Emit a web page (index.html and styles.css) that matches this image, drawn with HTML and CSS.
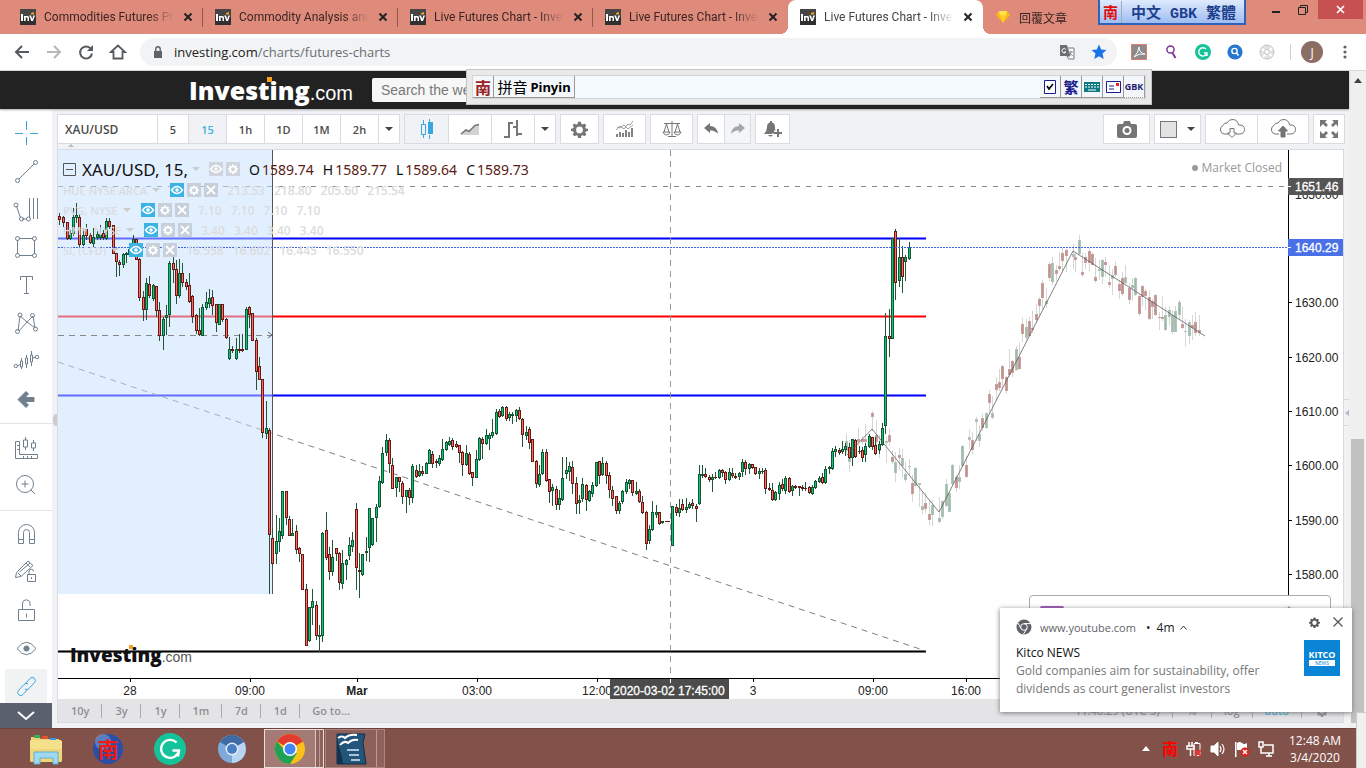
FILE: index.html
```html
<!DOCTYPE html>
<html lang="en">
<head>
<meta charset="utf-8">
<title>Live Futures Chart - Investing.com</title>
<link rel="stylesheet" href="styles.css">
</head>
<body>
<svg class="defs" aria-hidden="true">
  <symbol id="fav" viewBox="0 0 16 16"><rect width="16" height="16" fill="#303030"/><rect width="16" height="8" fill="#454545"/><path d="M1 5h2v7H1zM4 7h3.5q1.500 0 1.500 1.500V12H7.500V9Q7.500 8.500 6.500 8.500H5.700V12H4zM9.200 6.500H11L12.200 10 13.400 6.500H15L13 12H11.300z" fill="#fff"/><path d="M11 4l3-1v2.500h-3z" fill="#f7a21b"/></symbol>
  <symbol id="gear" viewBox="0 0 20 20"><path fill="currentColor" fill-rule="evenodd" d="M8.300 1h3.400l.5 2.500 1.500.7L15.900 3 18 5.200l-1.300 2.100.6 1.400L20 9.200v2.600l-2.600.5-.6 1.500L18 16l-2 2-2.200-1.300-1.500.6L11.700 20H8.300l-.5-2.600-1.500-.7L4 18l-2-2 1.300-2.200-.6-1.500L0 11.800V9.200l2.600-.6.7-1.400L2 5l2-2 2.200 1.300 1.500-.7zM10 6.500a4 4 0 1 0 0 8 4 4 0 0 0 0-8z"/></symbol>
  <symbol id="eye" viewBox="0 0 14 14"><path d="M1.500 7Q7 0 12.500 7 7 14 1.500 7z" fill="none" stroke="#fff" stroke-width="1.500"/><circle cx="7" cy="7" r="1.800" fill="#fff"/></symbol>
  <symbol id="x" viewBox="0 0 14 14"><path d="M3 3l8 8M11 3l-8 8" stroke="#fff" stroke-width="1.800"/></symbol>
</svg>

<div class="tabs">
  <div class="tab"><svg class="fav"><use href="#fav"/></svg><span class="tab-t">Commodities Futures Prices</span><button class="tab-x" aria-label="Close tab"><svg viewBox="0 0 8 8"><path d="M.5.5l7 7M7.500.5l-7 7"/></svg></button></div>
  <div class="tab"><svg class="fav"><use href="#fav"/></svg><span class="tab-t">Commodity Analysis and Opinion</span><button class="tab-x" aria-label="Close tab"><svg viewBox="0 0 8 8"><path d="M.5.5l7 7M7.500.5l-7 7"/></svg></button></div>
  <div class="tab"><svg class="fav"><use href="#fav"/></svg><span class="tab-t">Live Futures Chart - Investing</span><button class="tab-x" aria-label="Close tab"><svg viewBox="0 0 8 8"><path d="M.5.5l7 7M7.500.5l-7 7"/></svg></button></div>
  <div class="tab last"><svg class="fav"><use href="#fav"/></svg><span class="tab-t">Live Futures Chart - Investing</span><button class="tab-x" aria-label="Close tab"><svg viewBox="0 0 8 8"><path d="M.5.5l7 7M7.500.5l-7 7"/></svg></button></div>
  <div class="tab active"><svg class="fav"><use href="#fav"/></svg><span class="tab-t">Live Futures Chart - Investing</span><button class="tab-x" aria-label="Close tab"><svg viewBox="0 0 8 8"><path d="M.5.5l7 7M7.500.5l-7 7"/></svg></button></div>
  <div class="tab last"><svg class="fav" viewBox="0 0 16 16"><path d="M4 2h8l3 4-7 8-7-8z" fill="#fcb813"/><path d="M4 2h8l-1 4H5z" fill="#ffe14d"/><path d="M5 6h6l-3 8z" fill="#ffd02b"/></svg><span class="tab-t">回覆文章</span></div>
  <div class="win">
    <button aria-label="Minimize"><svg width="8" height="10"><path d="M0 6h8v2H0z" fill="#222"/></svg></button>
    <button aria-label="Restore"><svg width="10" height="10" fill="none" stroke="#222"><path d="M.5 2.500h7v7h-7zM2.500 2V.5h7v7H8"/></svg></button>
    <button class="win-x" aria-label="Close"><svg width="9" height="9"><path d="M1 1l7 7M8 1L1 8" stroke="#fff" stroke-width="1.700"/></svg></button>
  </div>
</div>

<div class="nav">
  <button aria-label="Back"><svg viewBox="0 0 16 16"><path d="M15 8H2M8 2L2 8l6 6" stroke="#555a5f" stroke-width="2" fill="none"/></svg></button>
  <button aria-label="Forward"><svg viewBox="0 0 16 16"><path d="M1 8h13M8 2l6 6-6 6" stroke="#b5b8bb" stroke-width="2" fill="none"/></svg></button>
  <button aria-label="Reload"><svg viewBox="0 0 16 16"><path d="M13 5A6 6 0 1 0 14 9.500" stroke="#555a5f" stroke-width="2" fill="none"/><path d="M15 1v6H9z" fill="#555a5f"/></svg></button>
  <button aria-label="Home"><svg viewBox="0 0 16 16"><path d="M1 8l7-6.500L15 8h-2.500v6.500h-9V8z" stroke="#555a5f" stroke-width="1.800" fill="none"/></svg></button>
  <div class="omni">
    <svg class="lock" viewBox="0 0 10 13"><path d="M1 5h8v7H1z" fill="#5f6368"/><path d="M2.800 5V3a2.200 2.200 0 0 1 4.400 0v2" stroke="#5f6368" stroke-width="1.400" fill="none"/></svg>
    <span class="url"><b>investing.com</b>/charts/futures-charts</span>
    <svg class="ic16" viewBox="0 0 16 16"><path d="M1 1h7l3 11H1z" fill="#6b6f73"/><path d="M8.500 4H15v11H9.500L8 12h3z" fill="#fff" stroke="#777"/><path d="M7 5.500A2.200 2.200 0 1 0 7 8H5" stroke="#fff" fill="none"/><path d="M10 8h4M12 7v1q0 3-2 4M11 9q1 2 3 3" stroke="#777" fill="none" stroke-width=".8"/></svg>
    <svg class="ic16" viewBox="0 0 16 16"><path d="M8 .5l2.200 5 5.300.5-4 3.600 1.200 5.400L8 12.200 3.300 15l1.200-5.400-4-3.600 5.300-.5z" fill="#1a73e8"/></svg>
  </div>
  <div class="ext">
    <svg class="ic16" viewBox="0 0 16 16"><path d="M.5.5h15v15H.5z" fill="#8b8b8b" stroke="#de7d6d"/><path d="M3 13q5-5 5-10 0 6 6 7Q8 9 3 13z" fill="none" stroke="#fff"/></svg>
    <svg class="ic16" viewBox="0 0 16 16"><circle cx="7.500" cy="5.500" r="3.600" fill="none" stroke="#7d2c9c" stroke-width="1.500"/><path d="M9.500 9l3 5" stroke="#7d2c9c" stroke-width="1.800"/></svg>
    <svg class="ic16" viewBox="0 0 16 16"><circle cx="8" cy="8" r="8" fill="#15c39a"/><path d="M11 5a4.200 4.200 0 1 0 1 4H9m3 0v3" stroke="#fff" stroke-width="1.400" fill="none"/></svg>
    <svg class="ic16" viewBox="0 0 16 16"><circle cx="8" cy="8" r="7.600" fill="#2478cf"/><circle cx="7.500" cy="7" r="2.600" fill="none" stroke="#fff" stroke-width="1.400"/><path d="M9.500 9l2 2.500" stroke="#fff" stroke-width="1.600"/></svg>
    <svg class="ic16" viewBox="0 0 16 16"><circle cx="8" cy="8" r="7" fill="#e2e2e0" stroke="#c3c3c0"/><path d="M3 5l10 7M13 4L4 13" stroke="#fff" stroke-width="2"/><circle cx="8" cy="8" r="2.500" fill="#fff" stroke="#c3c3c0"/></svg>
    <i class="vr"></i><span class="avatar">J</span>
    <svg class="dots" viewBox="0 0 4 14" fill="#5f6368"><circle cx="2" cy="2" r="1.600"/><circle cx="2" cy="7" r="1.600"/><circle cx="2" cy="12" r="1.600"/></svg>
  </div>
</div>

<div class="view">
<div class="page">
  <header class="site">
    <a class="logo" href="#">Investing<span>.com</span><i></i></a>
    <input class="search" type="text" aria-label="Search" placeholder="Search the website...">
  </header>
  <div class="app">
    <aside class="tools">
      <div class="tg">
        <button class="tool on" aria-label="Cross"><svg><path d="M12.500 0v9M12.500 16v8M1 12.500h8M16 12.500h8"/></svg></button>
        <button class="tool" aria-label="Trend line"><svg><path d="M5 20L20 5"/><circle cx="3.500" cy="21.500" r="2"/><circle cx="21.500" cy="3.500" r="2"/></svg></button>
        <button class="tool" aria-label="Pitchfork"><svg><path d="M2.500 9l4 12M8 22h5M15.500 21V1M19.500 22V1M23.500 22V1"/><circle cx="2" cy="8" r="2"/><circle cx="7.500" cy="22" r="2"/><circle cx="14.500" cy="22" r="2"/></svg></button>
        <button class="tool" aria-label="Rectangle"><svg><path d="M5 3.500h14M5 20.500h14M3.500 5v14M20.500 5v14"/><circle cx="3.500" cy="3.500" r="2"/><circle cx="20.500" cy="3.500" r="2"/><circle cx="3.500" cy="20.500" r="2"/><circle cx="20.500" cy="20.500" r="2"/></svg></button>
        <button class="tool" aria-label="Text"><svg><path d="M6.500 7V3.500h12V7M12.500 4v16.500M10 20.500h5"/></svg></button>
        <button class="tool" aria-label="Pattern"><svg><path d="M4 20L6 5l7 6 6-6 2 12-8-6-8 9"/><circle cx="6" cy="4" r="2"/><circle cx="18.500" cy="4.500" r="2"/><circle cx="3.500" cy="20.500" r="2"/><circle cx="21.500" cy="18" r="2"/></svg></button>
        <button class="tool" aria-label="Forecast"><svg><path d="M3 17l4-2M19 9l3-1M7.500 9v3M7.500 18v2M12.500 6v3M12.500 15v4M17.500 2v4M17.500 13v4"/><path d="M6.500 12h2v6h-2zM11.500 9h2v6h-2zM16.500 6h2v7h-2z"/><circle cx="1.800" cy="17" r="1.700"/><circle cx="23" cy="8" r="1.700"/></svg></button>
        <button class="tool" aria-label="Back"><svg><path d="M4 12.500l8-8 2.500 2.500-3.500 3.500H20v4h-9l3.500 3.500L12 20.500z" fill="#70808f"/></svg></button>
      </div>
      <div class="tg tg2">
        <button class="tool" aria-label="Measure"><svg><path d="M1.500 5.500h4v13h18v4h-22zM3 9.500h2M3 13.500h2M9.500 20v2M13.500 20v2M17.500 20v2M11.500 1v3M11.500 11v3M19.500 4v3M19.500 12v3"/><path d="M9.500 4h4v7h-4zM17.500 7h4v5h-4z"/></svg></button>
        <button class="tool" aria-label="Zoom in"><svg><circle cx="11" cy="11" r="8.500"/><path d="M17 17l4 4M11 7.500v7M7.500 11h7"/></svg></button>
      </div>
      <div class="tg tg3">
        <button class="tool" aria-label="Magnet"><svg><path d="M4.500 21.500v-11a8 8 0 0 1 16 0v11h-5v-11a3 3 0 0 0-6 0v11zM4.500 17.500h5M15.500 17.500h5"/></svg></button>
        <button class="tool" aria-label="Stay in drawing mode"><svg><path d="M1.500 17.500l1-5L14 1l5 4.500L7 16.500zM4 13l3 3M5.500 12L16 3M12 3l4 4M13.500 14.500h8v7h-8zM15 14v-2.500a2 2 0 0 1 4.500 0M17.500 17v2"/></svg></button>
        <button class="tool" aria-label="Lock"><svg><path d="M4.500 11.500h16v11h-16zM8.500 11V5a3.800 3.800 0 0 1 7.500 0v3M12.500 15.500v4"/></svg></button>
        <button class="tool" aria-label="Hide"><svg><path d="M3 12.500Q12.500 0 22 12.500 12.500 25 3 12.500z"/><circle cx="12.500" cy="12.500" r="2.600" fill="#70808f"/></svg></button>
        <button class="tool on sel" aria-label="Link"><svg><path d="M11 10l5-5.500a3 3 0 0 1 4.500 4L15 14.500a3 3 0 0 1-4 .5M14 15l-5 5.500a3 3 0 0 1-4.500-4L10 10.500a3 3 0 0 1 4-.5"/></svg></button>
      </div>
      <button class="more" aria-label="More"><svg width="18" height="10"><path d="M1 1l8 7 8-7" fill="none" stroke="#fff" stroke-width="2"/></svg></button>
    </aside>

    <main class="main">
      <div class="bar">
        <div class="bg"><button class="sym">XAU/USD</button><button class="w31">5</button><button class="on w38">15</button><button class="w38">1h</button><button class="w38">1D</button><button class="w38">1M</button><button class="w38">2h</button><button class="dd" aria-label="More intervals"><i></i></button></div>
        <div class="bg"><button class="on w43" aria-label="Candles"><svg width="14" height="20" stroke="#37a6dc" fill="none"><path d="M3.500 1v4M3.500 15v4M9.500 0v3M9.500 16v4"/><path d="M1.500 5.500h4v10h-4z"/><path d="M8 3h5v12H8z" fill="#37a6dc" stroke="none"/></svg></button><button class="w43" aria-label="Area"><svg width="18" height="12"><path d="M0 10l5-4 4 2 5-5 4-2v11H0z" fill="#d2d2d2"/><path d="M0 11l5-4 3 1.500 6-6 4-1" fill="none" stroke="#757575" stroke-width="1.500"/></svg></button><button class="w43" aria-label="Bars"><svg width="18" height="19" stroke="#757575" stroke-width="2" fill="none"><path d="M5 2v16M0 17h5M5 3h4M13 0v16M9 7h4M13 14h5"/></svg></button><button class="dd" aria-label="More styles"><i></i></button></div>
        <div class="bg"><button class="w37 gr" aria-label="Settings"><svg width="17" height="17"><use href="#gear"/></svg></button></div>
        <div class="bg"><button class="w41" aria-label="Indicators"><svg width="18" height="16" fill="none" stroke="#757575"><path d="M1 16v-3M4 16v-5M7 16v-4M10 16V9M13 16v-5M16 16V7" stroke-width="1.800"/><path d="M0 9l4-4 4 3 4-5 2 1 3-4M1 6l3 1 4-3 4 4 5-4" stroke-width=".7"/></svg></button></div>
        <div class="bg"><button class="w41" aria-label="Compare"><svg width="18" height="16" fill="none" stroke="#757575"><path d="M1 2.500h16M9 0v15M5 15.500h8M3.500 3L1 11M3.500 3L6 11M14.500 3L12 11M14.500 3L17 11"/><path d="M0 11h7q-1 3-3.500 3T0 11zM11 11h7q-1 3-3.500 3T11 11z"/></svg></button></div>
        <div class="bg"><button class="w26" aria-label="Undo"><svg width="14" height="12"><path d="M0 5l6-5v3q7 0 8 8-3-4-8-3.500V10z" fill="#757575"/></svg></button><button class="w26 dis" aria-label="Redo"><svg width="14" height="12"><path d="M14 5L8 0v3Q1 3 0 11q3-4 8-3.500V10z" fill="#a5a7aa"/></svg></button></div>
        <div class="bg"><button class="w33" aria-label="Alert"><svg width="18" height="17" fill="#757575"><path d="M0 13q3-3 3-7 0-4 3-4.500V0h2v1.500Q11 2 11 6q0 2 .5 3.500H10v3H8V13z"/><path d="M4 14h5q-2.500 3-5 0z"/><path d="M13 8h2v3h3v2h-3v3h-2v-3h-3v-2h3z"/></svg></button></div>
        <span class="grow"></span>
        <div class="bg"><button class="w45" aria-label="Snapshot"><svg width="20" height="17" fill="#757575"><path d="M2 3h4l1-3h6l1 3h4q2 0 2 2v10q0 2-2 2H2q-2 0-2-2V5q0-2 2-2z"/><circle cx="10" cy="9.500" r="4.500" fill="#fff"/><circle cx="10" cy="9.500" r="2.500"/></svg></button></div>
        <div class="bg"><button class="w45 color" aria-label="Background colour"><b></b><i></i></button></div>
        <div class="bg"><button class="w51" aria-label="Load"><svg width="26" height="20" fill="none" stroke="#757575"><path d="M10 15H5a4.500 4.500 0 0 1-1-8.500q1-3 4-2.500 2-4 6-3.500 5 .5 5.500 5.500 6-.5 6 4.500 0 4-4.500 4.500H17"/><path d="M11 9.500h4V14h2.500L13 18.500 8.500 14H11z"/></svg></button><button class="w51" aria-label="Save"><svg width="26" height="20" fill="none" stroke="#757575"><path d="M9 15H5a4.500 4.500 0 0 1-1-8.500q1-3 4-2.500 2-4 6-3.500 5 .5 5.500 5.500 6-.5 6 4.500 0 4-4.500 4.500H17"/><path d="M11 18v-6H8.500L13 7l4.500 5H15v6z" fill="#757575"/></svg></button></div>
        <div class="bg"><button class="w30" aria-label="Full screen"><svg width="18" height="18"><path d="M0 0h7L5 2l3 3-2 2-3-3-3 3zM18 0h-6l2 2-3 3 2 2 3-3 2 3zM0 18h7l-2-2 3-3-2-2-3 3-3-3zM18 18h-6l2-2-3-3 2-2 3 3 2-3z" fill="#757575"/></svg></button></div>
      </div>
      <div class="strip"><span></span></div>
      <div class="chart">
        <div class="plotrow">
          <div class="plot">
            <svg class="canvas" role="img" aria-label="XAU/USD 15 minute candles">
              <g transform="translate(-58 -150)">
                <path d="M58 186.500H4000" stroke="#8a8a8a" stroke-dasharray="5 6"/>
                <g fill="none"><path d="M58 238.500H926M58 395.500H926" stroke="#7c7cff" stroke-width="3"/><path d="M58 316.500H926" stroke="#ff7c7c" stroke-width="3"/><path d="M58 238.500H926M58 395.500H926" stroke="#0000ff"/><path d="M58 316.500H926" stroke="#ff0000"/></g>
                <path d="M58 651.500H926" stroke="#777" stroke-width="3"/><path d="M58 651.500H926" stroke="#000"/>
                <path d="M58 362L926 651" stroke="#808080" stroke-dasharray="6 5"/>
                <rect x="58" y="150" width="215" height="444" fill="#c5dfff" fill-opacity=".5"/>
                <path d="M58 335.500H272" stroke="#888" stroke-dasharray="6 5"/><path d="M268 332l4 3-4 3" fill="none" stroke="#666"/>
                <path d="M272.500 150V594" stroke="#555"/>
                <g id="ghost" shape-rendering="crispEdges"></g>
                <g id="candles" shape-rendering="crispEdges"></g>
                <path d="M847 455L872 429 939 512 1073 251 1205 336" fill="none" stroke="#555" stroke-opacity=".75"/>
                <path d="M58 247.500H4000" stroke="#3d65e0" stroke-dasharray="2 1"/>
                <path d="M670.500 150V680" stroke="#999" stroke-dasharray="6 5"/>
              </g>
            </svg>
            <div class="legend">
              <div class="lr head"><svg width="13" height="13" fill="none" stroke="#555"><path d="M.5.5h12v12H.5zM3 6.500h7"/></svg><span class="ttl">XAU/USD, 15,</span><i class="car"></i><span class="sq off"><svg><use href="#eye"/></svg></span><span class="sq off"><svg viewBox="-4 -4 28 28"><use href="#gear" width="20" height="20"/></svg></span>
                <span class="ohlc"><b>O</b>1589.74</span><span class="ohlc"><b>H</b>1589.77</span><span class="ohlc"><b>L</b>1589.64</span><span class="ohlc"><b>C</b>1589.73</span></div>
              <div class="lr"><span class="nm">HUI, NYSE ARCA</span><i class="car"></i><span class="sq"><svg><use href="#eye"/></svg></span><span class="sq off"><svg viewBox="-4 -4 28 28"><use href="#gear" width="20" height="20"/></svg></span><span class="sq off"><svg><use href="#x"/></svg></span><span class="vals"><span>213.53</span><span>218.80</span><span>205.60</span><span>215.54</span></span></div>
              <div class="lr"><span class="nm">PVG, NYSE</span><i class="car"></i><span class="sq"><svg><use href="#eye"/></svg></span><span class="sq off"><svg viewBox="-4 -4 28 28"><use href="#gear" width="20" height="20"/></svg></span><span class="sq off"><svg><use href="#x"/></svg></span><span class="vals"><span>7.10</span><span>7.10</span><span>7.10</span><span>7.10</span></span></div>
              <div class="lr"><span class="nm">HMY, NYSE</span><i class="car"></i><span class="sq"><svg><use href="#eye"/></svg></span><span class="sq off"><svg viewBox="-4 -4 28 28"><use href="#gear" width="20" height="20"/></svg></span><span class="sq off"><svg><use href="#x"/></svg></span><span class="vals"><span>3.40</span><span>3.40</span><span>3.40</span><span>3.40</span></span></div>
              <div class="lr"><span class="nm">SI, (CFD)</span><i class="car"></i><span class="sq"><svg><use href="#eye"/></svg></span><span class="sq off"><svg viewBox="-4 -4 28 28"><use href="#gear" width="20" height="20"/></svg></span><span class="sq off"><svg><use href="#x"/></svg></span><span class="vals"><span>16.558</span><span>16.602</span><span>16.445</span><span>16.550</span></span></div>
            </div>
            <div class="status"><i></i>Market Closed</div>
            <div class="wm">Investing<span>.com</span><i></i></div>
          </div>
          <svg class="paxis"><g transform="translate(0 -150)" id="prices"></g></svg>
        </div>
        <svg class="taxis"><g transform="translate(-58 -679)" id="times"></g></svg>
        <div class="ranges"><button>10y</button><button>3y</button><button>1y</button><button>1m</button><button>7d</button><button>1d</button><button class="nb">Go to...</button><span class="grow"></span><button>11:48:29 (UTC-5)</button><button>%</button><button>log</button><button class="auto">auto</button><button class="nb" aria-label="Settings"><svg width="12" height="12"><use href="#gear"/></svg></button></div>
      </div>
      <button class="lefth" aria-label="Collapse tools"></button>
      <button class="righth" aria-label="Open panel"><svg width="4" height="6"><path d="M4 0v6L0 3z" fill="#b5b8be"/></svg></button>
    </main>
  </div>
</div>
<div class="scroll"><i></i><div class="track"><b></b></div></div>
</div>

<footer class="task">
  <a class="app-i" href="#" aria-label="File Explorer"><svg viewBox="0 0 32 32"><path d="M1 4h8l2 2h18v4H1z" fill="#e8d27a"/><path d="M4 2h6v3H4z" fill="#37b24a"/><path d="M12 3h6v3h-6z" fill="#e0532f"/><path d="M20 5h6v3h-6z" fill="#3a97e8"/><path d="M0 8q0-1 1-1h29q2 0 2 2v18q0 2-2 2H2q-2 0-2-2z" fill="#f5e18b"/><path d="M0 16h32v11q0 2-2 2H2q-2 0-2-2z" fill="#efd678"/><path d="M4 19h24v12h-5v-6H10v6H4z" fill="#9fd8ef" stroke="#5fb0d4"/></svg></a>
  <a class="app-i" href="#" aria-label="NJStar"><svg viewBox="0 0 32 32"><circle cx="16" cy="16" r="15" fill="#2a4fa6"/><circle cx="11" cy="9" r="8" fill="#7c9bd4" opacity=".6"/></svg><b>南</b></a>
  <a class="app-i" href="#" aria-label="Grammarly"><svg viewBox="0 0 32 32"><circle cx="16" cy="16" r="16" fill="#15c39a"/><path d="M22.500 9.500a9 9 0 1 0 2.500 8h-6.500M25 17.500l-1 6" stroke="#fff" stroke-width="2.400" fill="none"/></svg></a>
  <a class="app-i" href="#" aria-label="Chromium"><svg viewBox="0 0 32 32"><circle cx="16" cy="16" r="14" fill="#7eaadb"/><path d="M16 16L3.900 9A14 14 0 0 1 28.100 9z" fill="#3e6ba3"/><path d="M16 16l12-7A14 14 0 0 1 16 30z" fill="#b9d4f0"/><circle cx="16" cy="16" r="6.500" fill="#e5effa"/><circle cx="16" cy="16" r="5" fill="#4a7ec4"/></svg></a>
  <a class="app-i run cur" href="#" aria-label="Chrome"><svg viewBox="0 0 32 32"><circle cx="16" cy="16" r="15" fill="#fbc116"/><path d="M16 16L3 8.500A15 15 0 0 1 29 8.500z" fill="#e33b2e"/><path d="M3 8.500A15 15 0 0 0 16 31l7-11-10 0z" fill="#1fa254"/><circle cx="16" cy="16" r="7" fill="#fff"/><circle cx="16" cy="16" r="5.500" fill="#4285f4"/></svg></a>
  <a class="app-i run" href="#" aria-label="OpenOffice Writer"><svg viewBox="0 0 32 32"><path d="M2 1h28l-2 9 3 21H2z" fill="#23547a" stroke="#0f2f49"/><path d="M2 8q5 13 6 23H2z" fill="#0f3350"/><path d="M12 17h12M14 22h10M16 27h9" stroke="#a9c6dc" stroke-width="2"/><path d="M5 12q4-5 8-2 4-4 10-3M3 5q4-3 7 0 4-4 12-3" stroke="#fff" stroke-width="2" fill="none"/></svg></a>
  <span class="grow"></span>
  <div class="tray">
    <svg class="up" width="8" height="5"><path d="M0 5l4-5 4 5z" fill="#fff"/></svg>
    <b>南</b>
    <svg width="16" height="16" fill="none" stroke="#fff"><path d="M3 1v4M6 1v4M1 5h7v3H1zM4.500 8v7" stroke-width="1.500"/><path d="M8 2.500h6v12H8zM9 1.500h3"/><path d="M9 9l6 6M15 9l-6 6" stroke="#e33" stroke-width="2"/></svg>
    <svg width="16" height="16" fill="none" stroke="#fff"><path d="M1 5h3l4-4v14l-4-4H1z" fill="#fff"/><path d="M10 5q2 3 0 6M12 3q4 5 0 10" stroke-width="1.200"/></svg>
    <svg width="16" height="16"><path d="M1 1h1.500v15H1zM3 2q3-2 5 0t5 0v7H3z" fill="#fff"/><circle cx="11" cy="11" r="4.500" fill="#d9231c"/><path d="M9 9l4 4M13 9l-4 4" stroke="#fff" stroke-width="1.500"/></svg>
    <svg width="16" height="16" fill="none" stroke="#fff" stroke-width="1.500"><path d="M6 4h9v8H6M8 15h6M11 12v3M1 1h4v5H1zM3 6v6h3"/></svg>
    <div class="clock">12:48 AM<br>3/4/2020</div>
  </div>
</footer>

<div class="corner"></div>
<div class="ime-top"><b>南</b><span>中文 GBK 繁體</span></div>
<div class="ime">
  <div class="ime-in"><button class="r">南</button><button class="py">拼音 <b>Pinyin</b></button><span class="grow"></span>
    <button aria-label="Toggle"><svg width="12" height="14"><path d="M.5.5h11v13H.5z" fill="#fff" stroke="#1c1c8c"/><path d="M3 6l2 3 4-5" stroke="#111" stroke-width="1.800" fill="none"/></svg></button>
    <button class="bl">繁</button>
    <button aria-label="Keyboard"><svg width="16" height="12"><path d="M0 1h16v10H0z" fill="#0b7a84"/><path d="M1 3.500h14M1 6h14" stroke="#fff" stroke-dasharray="2 1"/><path d="M4 9h8" stroke="#fff"/></svg></button>
    <button aria-label="Mail"><svg width="15" height="12"><path d="M.5.5h14v11H.5z" fill="#fff" stroke="#1c1c8c"/><path d="M3 5h5M3 8h5" stroke="#1c1c8c"/><path d="M10 2h3v3h-3z" fill="#e22"/></svg></button>
    <button class="gbk">GBK</button></div>
</div>
<div class="flag"></div>
<div class="popup"><i></i><svg width="10" height="10"><use href="#gear"/></svg></div>
<section class="toast">
  <div class="th"><svg width="16" height="16"><circle cx="8" cy="8" r="7.500" fill="#5f6368"/><circle cx="8" cy="8" r="3.300" fill="#5f6368" stroke="#fff"/><path d="M8 4.600h7M5 9.500L2 4M11 9.500L7.500 15" stroke="#fff"/></svg><span class="src">www.youtube.com</span><span class="age">•&nbsp; 4m</span><svg width="7" height="5"><path d="M.5 4.500l3-3.500 3 3.500" fill="none" stroke="#333"/></svg><span class="grow"></span><button aria-label="Settings"><svg width="11" height="11"><use href="#gear"/></svg></button><button aria-label="Dismiss"><svg width="10" height="10"><path d="M.5.5l9 9M9.500.5l-9 9" stroke="#555" stroke-width="1.300"/></svg></button></div>
  <div class="tb"><div><h2>Kitco NEWS</h2><p>Gold companies aim for sustainability, offer dividends as court generalist investors</p></div><div class="kitco"><b>KITCO</b><span>NEWS</span></div></div>
</section>
<script src="chart.js"></script>
</body>
</html>
```
FILE: styles.css
```css
* { box-sizing: border-box; }
body { margin: 0; height: 100vh; display: flex; flex-direction: column; position: relative; overflow: hidden; background: #fff; font: 12px "Open Sans", "Noto Sans CJK TC", sans-serif; color: #333; }
button { border: 0; background: none; padding: 0; font: inherit; color: inherit; display: flex; align-items: center; justify-content: center; flex: none; }
svg { flex: none; overflow: visible; }
a { text-decoration: none; color: inherit; }
.defs { position: absolute; width: 0; height: 0; }
.grow { flex: 1; }

.tabs { height: 34px; flex: none; display: flex; background: #de8b7c; padding-left: 8px; font-family: Roboto, "Noto Sans CJK TC", sans-serif; }
.tab { width: 195px; display: flex; align-items: center; padding: 0 10px 0 12px; position: relative; color: #3b2522; }
.tab:not(.last):not(.active)::after { content: ""; position: absolute; right: 0; top: 8px; height: 19px; width: 1px; background: #8d5850; }
.fav { width: 16px; height: 16px; margin-right: 8px; }
.tab-t { flex: 1; white-space: nowrap; overflow: hidden; mask-image: linear-gradient(90deg, #000 80%, transparent); }
.tab-x { width: 10px; height: 16px; margin-left: 9px; }
.tab-x svg { width: 8px; height: 8px; stroke: #222; stroke-width: 2; }
.active { background: #fff; border-radius: 8px 8px 0 0; color: #444; }
.active::before, .active::after { content: ""; position: absolute; bottom: 0; width: 8px; height: 8px; }
.active::before { left: -8px; background: radial-gradient(circle at 0 0, transparent 8px, #fff 8px); }
.active::after { right: -8px; background: radial-gradient(circle at 100% 0, transparent 8px, #fff 8px); }
.win { margin-left: auto; display: flex; align-items: flex-start; padding-right: 3px; gap: 3px; }
.win button { width: 24px; height: 19px; }
.win .win-x { width: 45px; background: #c75050; }

.nav { height: 37px; flex: none; display: flex; align-items: center; padding-left: 14px; gap: 16px; border-bottom: 1px solid #d6d8da; }
.nav > button svg { width: 16px; height: 16px; }
.omni { flex: 1; margin-left: -2px; height: 28px; border-radius: 14px; background: #f1f3f4; display: flex; align-items: center; gap: 16px; padding: 0 10px 0 13px; }
.lock { width: 10px; height: 13px; }
.url { flex: 1; font-size: 13px; color: #6a6e72; margin-left: -5px; }
.url b { font-weight: 400; color: #222; }
.ic16 { width: 16px; height: 16px; }
.ext { display: flex; align-items: center; gap: 16px; padding: 0 19px 0 0; margin-left: -2px; }
.vr { width: 1px; height: 16px; background: #cfd1d3; margin: 0 -6px 0 -1px; }
.avatar { width: 22px; height: 22px; border-radius: 50%; background: #8d6e63; color: #fff; display: flex; align-items: center; justify-content: center; }
.dots { width: 4px; height: 14px; margin-left: 4px; }

.view { flex: 1; min-height: 0; display: flex; }
.page { flex: 1; min-width: 0; display: flex; flex-direction: column; background: #f1f2f6; }
.site { height: 38px; flex: none; background: #222; display: flex; align-items: center; padding-left: 189px; gap: 18px; box-shadow: 0 1px 2px #aaa; z-index: 1; }
.logo, .wm { position: relative; font: 800 25px/32px "Open Sans", sans-serif; color: #fff; }
.logo { width: 165px; white-space: nowrap; }
.logo span { font: 400 20px "Liberation Sans", sans-serif; }
.logo i { position: absolute; left: 78px; top: 3px; width: 5px; height: 5px; background: #f9a11b; }
.search { width: 300px; height: 24px; border: 0; border-radius: 2px; background: #f7f7f7; padding: 0 9px; font: 14px "Liberation Sans", sans-serif; }
.search::placeholder { color: #777; opacity: 1; }
.scroll { width: 17px; background: #f0f0f0; display: flex; flex-direction: column; align-items: center; padding-top: 7px; }
.scroll i { border: 4px solid transparent; border-top: 0; border-bottom: 5px solid #444; }
.track { flex: 1; width: 13px; display: flex; flex-direction: column; justify-content: flex-end; }
.track b { height: 44%; background: #c1c1c1; margin-bottom: 5px; }

.app { flex: 1; min-height: 0; display: flex; }
.tools { width: 52px; background: #fff; display: flex; flex-direction: column; overflow: hidden; }
.tg { padding: 5px 5px; }
.tg2 { border-top: 1px solid #dfe5ea; border-bottom: 1px solid #dfe5ea; padding: 6px 5px; }
.tg2 .tool { height: 37px; }
.tg3 { padding: 4px 5px 0; }
.tool { width: 42px; height: 38px; border-radius: 2px; }
.tool svg { width: 25px; height: 25px; fill: none; stroke: #70808f; }
.tool.on svg { stroke: #37a6dc; }
.tool.sel { background: #f1f2f4; height: 34px; margin-top: 2px; }
.more { flex: 1; background: #5b606e; }

.main { flex: 1; min-width: 0; display: flex; flex-direction: column; padding: 5px 0 5px 5px; position: relative; }
.bar { display: flex; gap: 4px; padding-right: 4px; height: 30px; flex: none; }
.bg { display: flex; border: 1px solid #d9dbe0; background: #fff; }
.bg button { color: #4a4a4a; font-weight: 600; font-size: 11px; }
.bg button + button { border-left: 1px solid #d9dbe0; }
.bg button.on { background: #f1f2f5; color: #3bb3e4; }
.bg button.dis { background: #f4f5f7; }
.bg button.gr { color: #757575; }
.bg .sym { width: 99px; justify-content: flex-start; padding-left: 7px; font-size: 12px; }
.w26 { width: 26px; } .w30 { width: 30px; } .w31 { width: 31px; } .w33 { width: 33px; } .w37 { width: 37px; }
.w38 { width: 38px; } .w41 { width: 41px; } .w43 { width: 43px; } .w45 { width: 45px; } .w51 { width: 51px; }
.dd { width: 21px; }
.dd i, .color i { border: 4px solid transparent; border-bottom: 0; border-top-color: #444; }
.color { gap: 10px; }
.color b { width: 17px; height: 17px; background: #e3e3e3; border: 1px solid #777; }
.strip { height: 5px; flex: none; padding-left: 10px; border-left: 1px solid #d9dbe0; }
.strip span { display: block; width: 0; border: 3px solid transparent; border-top: 0; border-bottom-color: #bbb; }
.chart { flex: 1; min-height: 0; display: flex; flex-direction: column; border: 1px solid #d9dbe0; background: #fff; margin-right: 5px; }
.plotrow { flex: 1; min-height: 0; display: flex; }
.plot { flex: 1; min-width: 0; position: relative; overflow: hidden; }
.canvas { position: absolute; width: 100%; height: 100%; }
.paxis { width: 55px; height: 100%; font: 12px "Liberation Sans", sans-serif; overflow: hidden; }
.taxis { width: 100%; height: 21px; font: 12px "Liberation Sans", sans-serif; overflow: hidden; }
.ranges { height: 23px; flex: none; background: #e4e4e7; display: flex; align-items: center; padding-left: 1px; padding-right: 2px; font-weight: 600; font-size: 11px; color: #8f8f93; }
.ranges button { height: 14px; padding: 0 12px; min-width: 39px; border-right: 1px solid #aaa; }
.ranges button.nb { border: 0; }
.ranges .auto { color: #3bb3e4; }

.legend { position: absolute; left: 5px; top: 9px; }
.lr { display: flex; align-items: center; height: 20px; gap: 3px; color: #dadcdd; font-weight: 600; white-space: nowrap; }
.head { margin-bottom: 1px; color: #111; }
.ttl { font: 17px "Noto Sans", sans-serif; margin-left: 3px; }
.nm { font-size: 11px; }
.car { border: 4px solid transparent; border-bottom: 0; border-top-color: #ccc; margin: 0 7px 0 2px; }
.head .car { margin: 0 6px 0 1px; }
.sq { width: 14px; height: 14px; background: #3bb3e4; display: flex; color: #fff; }
.sq.off { background: #c6cfda; }
.head .sq.off { background: #cdd4dd; }
.sq svg { width: 14px; height: 14px; }
.vals { display: flex; gap: 9px; margin-left: 6px; }
.ohlc { font: 14px "Noto Sans", sans-serif; color: #5b1a13; margin-left: 6px; }
.ohlc b { font-weight: 400; color: #111; margin-right: 2px; }
.status { position: absolute; right: 6px; top: 9px; display: flex; align-items: center; gap: 4px; color: #999; }
.status i { width: 6px; height: 6px; border-radius: 50%; background: #999; }
.wm { position: absolute; left: 12px; bottom: 11px; font-size: 19px; line-height: 24px; color: #111; }
.wm span { font: 400 14px "Liberation Sans", sans-serif; color: #555; }
.wm i { position: absolute; left: 59px; top: 2px; width: 4px; height: 4px; background: #f9a11b; }
.lefth { position: absolute; left: 1px; top: 305px; width: 4px; height: 12px; background: #ccc; border-radius: 4px 0 0 4px; }
.righth { position: absolute; right: 0; top: 290px; width: 5px; height: 27px; border: 1px solid #d9dbe0; border-width: 1px 0; }

.task { height: 40px; flex: none; background: #82514a; border-top: 1px solid #6d413b; display: flex; align-items: center; padding-left: 15px; }
.app-i { width: 62px; height: 39px; display: flex; align-items: center; justify-content: center; position: relative; }
.app-i svg { width: 32px; height: 32px; }
.app-i b { position: absolute; font-size: 21px; line-height: 24px; color: #f21a10; }
.run { width: 60px; margin-left: 1px; padding-right: 8px; background: linear-gradient(90deg, #a37a74 50px, #d9c8c5 50px, #d9c8c5 51px, #8f635c 51px, #8f635c 54px, #b79b97 54px, #b79b97 55px, #8f635c 55px); border: 1px solid #a98680; }
.cur { border-color: #eadfdd; }
.run:not(.cur) { background: linear-gradient(90deg, #8d615a 50px, #b79b97 50px, #b79b97 51px, #8f635c 51px); }
.tray { display: flex; align-items: center; gap: 8px; color: #fff; padding-right: 25px; }
.tray b { color: #f00; font-size: 16px; line-height: 20px; }
.clock { text-align: center; line-height: 17px; margin-left: 7px; width: 52px; white-space: nowrap; }
.up { margin-right: 4px; }

.corner { position: absolute; right: 0; bottom: 0; width: 10px; height: 56px; background: #f0f0f0; border: 1px solid #ccc; border-width: 1px 0 0 1px; }
.ime-top { position: absolute; right: 120px; top: 0; width: 148px; height: 25px; background: linear-gradient(#dfeafc, #9fbdf2); border: 1px solid #2e62b8; border-width: 0 2px 2px; display: flex; align-items: center; color: #1d3f8e; font: 15px "Liberation Mono", "Noto Sans CJK SC", monospace; white-space: nowrap; }
.ime-top b { color: #e01010; width: 22px; text-align: center; border-right: 1px solid #9ab; margin-right: 9px; }
.ime-top span { font-weight: 700; }
.ime { position: absolute; left: 466px; right: 214px; top: 69px; height: 36px; background: #e9e9e9; border: 1px solid #c4c4c4; padding: 5px; z-index: 3; }
.ime-in { height: 24px; background: #f5faff; border: 1px solid #d5d5d5; display: flex; }
.ime button { width: 21px; height: 22px; background: #f3f6fa; border: 1px solid #999; border-width: 0 1px 1px 0; }
.ime .r { color: #9b2222; font-weight: 700; font-size: 16px; }
.ime .py { width: 81px; color: #000; font-size: 15px; }
.ime .py b { font: 700 13px "Noto Sans", sans-serif; margin-left: 3px; }
.ime .bl { color: #1c1c8c; font-weight: 700; font-size: 15px; }
.ime .gbk { color: #1c1c6c; font-weight: 700; font-size: 9px; border-bottom-style: dotted; }
.flag { position: absolute; right: 207px; top: 85px; width: 7px; height: 10px; background: repeating-linear-gradient(#c33 0 1px, #fff 1px 2px); }
.popup { position: absolute; right: 35px; bottom: 56px; width: 302px; height: 117px; border: 1px solid #aaa; border-radius: 4px; background: #fff; }
.popup i { position: absolute; left: 10px; top: 10px; width: 24px; height: 20px; border-radius: 2px; background: #9a4fb5; }
.popup svg { position: absolute; right: 36px; top: 10px; color: #999; }
.toast { position: absolute; right: 14px; bottom: 56px; width: 352px; height: 104px; background: #fff; box-shadow: 0 1px 5px #777; padding: 8px 8px 0 16px; z-index: 4; }
.th { display: flex; align-items: center; height: 22px; color: #555; }
.th > svg:first-child { margin-right: 8px; }
.src { color: #5f6368; font-size: 11px; }
.age { color: #222; margin: 0 5px 0 10px; }
.th button { margin-left: 12px; width: 12px; height: 12px; margin-bottom: 10px; }
.tb { display: flex; justify-content: space-between; padding-right: 4px; }
.tb h2 { margin: 6px 0 0; font-size: 12px; font-weight: 400; line-height: 18px; color: #111; }
.tb p { margin: 0; width: 268px; line-height: 18px; color: #777; }
.kitco { width: 36px; height: 36px; margin-top: 2px; background: #0a84d4; color: #fff; display: flex; flex-direction: column; align-items: center; justify-content: center; }
.kitco b { font-size: 9px; line-height: 10px; }
.kitco span { background: #fff; color: #0a84d4; font-size: 5px; line-height: 6px; padding: 0 6px; }
```
FILE: chart.js
```js
// Each candle: x, high, body top, body bottom, low, direction (g up, r down).
const candles = `59 213 216 219 224 r,63 216 217 222 226 r,67 222 222 238 239 r,70 230 233 238 239 g,73 208 217 233 235 g,76 203 215 217 222 g,79 214 217 244 247 r,83 228 235 244 245 g,86 224 229 235 239 r,90 233 235 242 243 r,93 228 237 243 246 g,97 231 234 237 239 g,100 225 234 237 239 g,103 230 233 237 239 r,106 218 221 238 239 g,109 218 221 226 228 r,113 225 225 253 253 r,116 253 253 261 276 r,119 260 262 264 275 r,123 253 254 264 267 g,126 252 253 254 262 g,129 243 249 254 255 g,133 235 239 249 250 g,136 239 239 259 259 r,139 258 259 297 300 r,143 291 297 309 320 r,146 278 283 309 319 g,149 276 284 295 297 r,153 284 285 298 300 g,156 286 286 310 316 r,159 302 310 335 340 r,163 317 319 335 349 g,166 305 315 317 334 g,169 261 263 314 326 g,173 244 263 269 282 r,176 260 269 295 303 r,179 259 273 295 297 g,182 263 273 282 286 r,186 279 282 286 289 r,189 273 285 301 302 r,192 295 296 316 322 r,196 314 315 330 333 r,199 308 330 334 335 r,202 304 307 335 335 g,206 292 302 307 309 g,209 289 298 303 307 g,212 290 297 305 314 r,216 304 304 322 331 r,219 304 304 324 324 g,222 304 304 319 321 r,226 318 319 337 338 r,229 337 349 358 359 g,232 346 349 350 352 r,236 338 349 358 359 g,239 334 349 350 352 r,242 334 349 350 351 r,246 307 309 349 349 g,249 306 307 314 327 r,252 313 313 340 340 r,256 338 340 371 389 r,259 357 366 379 379 r,262 379 379 432 437 r,266 401 428 433 438 g,269 428 430 534 593 r,272 528 538 563 566 r,276 515 541 553 563 g,279 518 531 541 551 g,282 491 491 535 538 g,286 491 491 517 524 r,289 516 519 535 535 r,292 519 533 535 535 g,296 525 531 549 553 r,299 547 548 553 561 r,302 554 554 589 589 r,306 584 589 645 645 r,309 607 607 640 641 g,312 589 601 607 624 g,316 601 605 635 639 r,319 625 635 636 651 g,322 532 533 635 641 g,326 512 530 557 559 r,329 547 554 571 579 r,332 540 557 571 575 g,336 548 548 553 560 r,339 552 553 582 589 r,342 550 563 583 588 g,346 559 560 564 579 g,349 537 545 555 559 g,352 532 540 546 551 g,356 503 509 567 589 r,359 553 570 571 597 r,362 554 554 574 575 g,366 537 551 552 560 g,369 508 508 547 561 g,372 518 518 544 545 g,376 504 507 517 541 g,379 476 481 506 507 g,382 447 453 482 483 g,386 434 440 452 455 g,389 438 440 463 472 r,392 458 465 488 488 r,396 477 477 487 496 g,399 477 477 481 491 r,402 481 483 496 503 r,406 490 490 496 512 g,409 488 490 497 504 r,412 464 466 497 502 g,416 465 470 476 477 r,419 464 471 475 476 g,422 466 471 473 475 r,426 462 463 473 473 g,429 449 450 463 463 g,432 451 454 463 467 r,436 459 461 462 467 r,439 455 458 463 465 g,442 439 449 459 460 g,446 441 442 449 450 g,449 437 441 444 445 g,452 438 440 446 449 r,456 441 444 446 447 r,459 445 445 452 462 r,462 451 452 464 475 r,466 445 453 464 465 g,469 452 454 473 474 r,472 472 472 477 485 r,476 450 459 477 477 g,479 437 438 459 460 g,482 437 439 443 458 r,486 429 435 443 444 g,489 433 435 438 449 g,492 419 432 435 437 g,496 409 412 433 434 g,499 409 411 416 417 r,502 406 407 415 416 g,506 406 407 418 420 r,509 412 414 417 420 g,512 412 414 415 423 g,516 409 410 415 421 g,519 407 410 418 419 r,522 418 419 434 446 r,526 426 432 435 439 g,529 427 429 442 448 r,532 439 439 461 461 r,536 460 461 483 487 r,539 465 474 484 486 g,542 449 452 473 474 g,546 449 452 480 481 r,549 479 479 491 502 r,552 484 487 490 505 g,556 486 489 504 509 r,559 490 498 504 509 g,562 457 478 499 500 g,566 457 470 473 478 g,569 462 466 471 480 g,572 461 467 483 493 r,576 477 483 503 513 r,579 495 500 502 513 g,582 478 484 498 501 g,586 484 485 499 510 r,589 490 491 500 501 g,592 482 485 493 496 g,596 462 462 485 486 g,599 461 461 475 483 r,602 457 463 474 475 g,606 461 463 475 483 r,609 472 475 489 497 r,612 486 490 498 505 r,616 496 496 510 513 r,619 501 503 510 513 g,622 490 491 501 503 g,626 479 482 491 493 g,629 479 480 483 488 g,632 480 480 492 495 r,636 482 491 493 494 g,639 489 491 501 502 r,642 496 502 512 513 r,646 511 512 543 549 r,649 525 529 540 543 g,652 501 512 529 530 g,656 505 512 514 517 g,659 512 512 523 524 r,662 521 521 522 523 g,666 521 521 521 521 r,668 521 521 521 521 r,672 506 506 545 545 g,676 504 507 512 515 r,679 499 508 512 516 g,682 499 504 509 510 r,686 498 507 509 512 g,689 502 504 507 508 g,692 499 503 505 508 r,696 504 506 508 521 r,699 465 474 503 504 g,702 465 474 475 477 g,705 468 474 476 477 r,709 475 477 479 481 r,712 474 477 479 491 g,715 472 477 477 478 r,719 469 470 477 478 g,722 469 470 472 476 r,725 471 472 479 483 r,729 468 472 479 480 g,732 468 473 475 477 r,735 473 476 477 478 r,739 472 473 476 479 g,742 459 462 471 476 g,745 460 462 468 474 r,749 463 464 468 473 g,752 464 464 467 468 r,755 467 467 473 474 r,759 468 471 473 478 g,762 468 471 471 473 g,765 468 470 488 493 r,769 483 488 489 490 r,772 483 490 499 500 r,775 491 492 499 500 g,779 482 485 493 499 g,782 479 484 488 490 r,785 476 478 490 493 g,789 477 478 491 492 r,792 485 486 490 495 g,795 485 486 487 488 r,799 486 486 487 495 r,802 485 487 488 490 r,805 482 488 488 490 r,809 486 487 492 493 r,812 485 487 493 494 g,815 480 481 487 488 g,819 476 478 481 482 g,822 473 477 482 483 r,825 466 469 482 483 g,829 466 467 468 473 g,832 448 451 468 469 g,835 446 449 451 456 g,839 448 450 452 454 r,842 441 449 451 453 g,845 443 446 449 455 g,849 443 447 457 458 r,852 439 439 457 465 g,855 439 440 456 457 r,859 446 451 451 453 g,862 447 450 457 461 r,865 443 446 454 461 g,869 434 436 446 447 g,872 437 437 446 449 r,875 437 445 453 454 r,879 441 444 449 453 g,882 423 428 444 445 g,885 313 336 425 433 g,889 309 336 338 356 r,892 238 238 338 338 g,895 229 231 282 299 r,899 238 257 280 286 g,902 246 257 276 292 r,905 255 257 261 280 g,909 242 247 258 259 g`;

const projected = `846 434 441 450 453 g,849 440 447 461 471 g,858 428 439 441 445 r,862 436 439 441 443 r,865 424 439 441 448 r,872 411 413 416 430 r,876 420 435 441 446 r,879 435 449 450 457 g,886 437 441 442 462 g,889 429 435 441 445 r,892 450 457 461 463 r,895 452 462 472 481 g,899 448 455 457 469 r,902 449 458 465 476 g,905 462 474 479 481 g,909 459 466 466 475 g,912 475 483 493 501 r,915 467 468 485 486 g,919 483 483 484 506 g,922 491 506 509 513 g,925 493 503 508 512 r,929 500 514 519 524 r,932 500 505 514 525 g,939 497 518 521 522 g,942 500 501 516 518 g,946 479 484 505 506 g,949 492 493 511 511 g,952 464 465 483 484 g,956 475 477 487 491 r,959 465 477 481 488 g,962 445 446 465 466 g,966 456 465 476 477 r,969 430 437 439 449 g,972 432 440 449 453 r,976 417 419 421 440 g,979 425 434 440 446 g,982 414 418 427 430 r,986 412 413 427 428 g,989 390 394 402 412 r,992 396 413 417 418 g,996 377 384 389 400 r,999 369 382 387 390 r,1002 365 366 378 389 r,1006 376 377 390 393 r,1009 349 369 374 376 r,1012 360 361 372 376 r,1016 346 349 369 370 g,1019 343 357 368 369 r,1022 318 324 333 341 r,1026 319 327 337 339 g,1029 317 321 335 336 r,1032 311 328 329 332 r,1036 304 314 319 322 r,1039 297 299 305 316 r,1042 280 283 297 308 r,1046 288 301 303 307 g,1049 262 264 277 280 r,1052 257 263 281 284 g,1056 265 270 273 280 r,1059 252 266 268 270 r,1062 248 253 260 270 r,1066 249 250 255 271 r,1073 244 254 256 268 g,1075 252 257 259 271 r,1079 235 240 253 254 g,1082 253 272 274 276 r,1085 253 257 262 268 r,1089 248 251 262 270 r,1092 252 254 264 265 r,1095 258 277 280 282 r,1099 260 269 270 279 g,1102 259 260 276 283 g,1105 257 262 264 276 r,1109 265 282 284 287 r,1112 269 275 278 294 g,1115 261 266 274 276 r,1119 280 284 290 298 r,1122 272 278 293 295 r,1125 265 277 282 284 g,1129 283 288 299 303 r,1132 278 285 287 300 g,1135 277 278 294 295 g,1139 294 296 313 315 r,1142 285 286 296 305 r,1145 289 291 295 309 r,1149 290 297 318 319 r,1152 299 301 306 318 r,1155 294 295 314 315 r,1159 312 317 317 329 r,1162 296 317 318 320 r,1165 307 315 329 330 g,1169 306 310 316 325 g,1172 310 315 331 333 g,1175 306 311 331 331 g,1179 300 302 314 319 g,1182 307 324 327 328 r,1185 319 331 331 345 g,1189 320 322 335 343 g,1192 315 325 327 339 r,1195 312 322 332 335 r,1199 315 330 332 335 r`;

function draw(id, data, wick, edge, fill) {
  document.getElementById(id).innerHTML = data.split(",").map(row => {
    const [x, hi, top, bot, lo, d] = row.split(" ");
    const h = bot - top + 1;
    let out = `<rect x="${x}" y="${hi}" width="1" height="${lo - hi + 1}" fill="${wick}"/><rect x="${x - 1}" y="${top}" width="3" height="${h}" fill="${edge[d]}"/>`;
    if (h > 2) out += `<rect x="${x}" y="${+top + 1}" width="1" height="${h - 2}" fill="${fill[d]}"/>`;
    return out;
  }).join("");
}
draw("ghost", projected, "#d6d6d6", { g: "#adc4b6", r: "#c9a09c" }, { g: "#a3bbad", r: "#bd918d" });
draw("candles", candles, "#225437", { g: "#165434", r: "#651a15" }, { g: "#00cc7c", r: "#ff6a5c" });

const prices = [["1650.00", 194], ["1630.00", 302], ["1620.00", 357], ["1610.00", 411], ["1600.00", 465], ["1590.00", 520], ["1580.00", 574], ["1570.00", 628]];
const badge = (label, y, color) => `<rect x="0" y="${y - 9}" width="55" height="17" fill="${color}"/><path d="M0 ${y - 0.5}h3" stroke="#fff"/><text x="7" y="${y + 4}" fill="#fff" stroke="#fff" stroke-width=".3">${label}</text>`;
document.getElementById("prices").innerHTML =
  `<path d="M.5 150V680" stroke="#000"/>` +
  prices.map(([t, y]) => `<path d="M0 ${y + 0.5}h4" stroke="#000"/><text x="7" y="${y + 5}" fill="#222">${t}</text>`).join("") +
  badge("1651.46", 187, "#555") + badge("1640.29", 248, "#4a70e8");

const times = [["28", 130], ["09:00", 250], ["Mar", 357], ["03:00", 477], ["12:00", 597], ["3", 753], ["09:00", 873], ["16:00", 966]];
document.getElementById("times").innerHTML =
  `<path d="M58 679.500H1289" stroke="#000"/>` +
  times.map(([t, x]) => `<path d="M${x + 0.5} 679v4" stroke="#000"/><text x="${x}" y="696" text-anchor="middle" fill="#222"${t === "Mar" ? ' font-weight="700"' : ""}>${t}</text>`).join("") +
  `<rect x="610" y="680" width="119" height="20" fill="#4c4c4c"/><path d="M670.500 680v4" stroke="#fff"/><text x="669" y="696" text-anchor="middle" fill="#fff" stroke="#fff" stroke-width=".3">2020-03-02 17:45:00</text>`;
```
